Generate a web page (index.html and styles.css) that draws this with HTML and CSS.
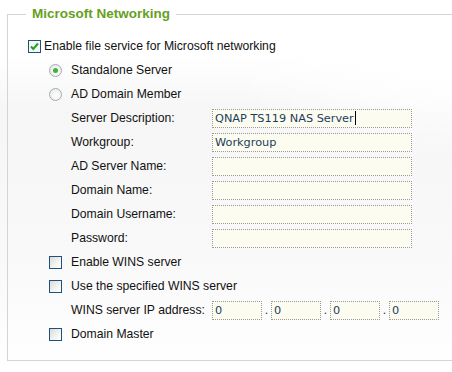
FILE: index.html
```html
<!DOCTYPE html>
<html>
<head>
<meta charset="utf-8">
<link rel="stylesheet" href="styles.css">
</head>
<body>
<fieldset class="panel">
  <legend class="panel-title">Microsoft Networking</legend>
  <div class="row">
    <span class="box checked"><svg viewBox="0 0 11 11" width="11" height="11"><path d="M2 5.5 L4.3 8 L9 2.5" fill="none" stroke="#21a121" stroke-width="2"/></svg></span>
    <span class="lbl-main">Enable file service for Microsoft networking</span>
  </div>
  <div class="sub">
    <div class="row"><span class="radio on"></span><span class="lbl">Standalone Server</span></div>
    <div class="row"><span class="radio"></span><span class="lbl">AD Domain Member</span></div>
    <div class="fields">
      <div class="row"><span class="flabel">Server Description:</span><span class="field">QNAP TS119 NAS Server<span class="caret"></span></span></div>
      <div class="row"><span class="flabel">Workgroup:</span><span class="field">Workgroup</span></div>
      <div class="row"><span class="flabel">AD Server Name:</span><span class="field"></span></div>
      <div class="row"><span class="flabel">Domain Name:</span><span class="field"></span></div>
      <div class="row"><span class="flabel">Domain Username:</span><span class="field"></span></div>
      <div class="row"><span class="flabel">Password:</span><span class="field"></span></div>
    </div>
    <div class="row"><span class="box"></span><span class="lbl">Enable WINS server</span></div>
    <div class="row"><span class="box"></span><span class="lbl">Use the specified WINS server</span></div>
    <div class="fields">
      <div class="row"><span class="flabel">WINS server IP address:</span>
        <span class="ip">
          <span class="field oct">0</span><span class="dot">.</span>
          <span class="field oct">0</span><span class="dot">.</span>
          <span class="field oct">0</span><span class="dot">.</span>
          <span class="field oct">0</span>
        </span>
      </div>
    </div>
    <div class="row"><span class="box"></span><span class="lbl">Domain Master</span></div>
  </div>
</fieldset>
</body>
</html>
```
FILE: styles.css
```css
html, body {
  margin: 0;
  padding: 0;
  width: 452px;
  height: 372px;
  overflow: hidden;
}
body {
  font-family: "Liberation Sans", Arial, sans-serif;
  font-size: 12.2px;
  color: #111;
  background:
    radial-gradient(ellipse 260px 120px at 470px 40px, rgba(255,255,255,1) 30%, rgba(255,255,255,0) 100%),
    linear-gradient(180deg, #ffffff 0px, #ffffff 55px, #f6f6f6 110px, #f9f9f9 260px, #ffffff 372px);
}
.panel {
  margin: 6px 0 0 7px;
  width: 445px;
  height: 355px;
  box-sizing: border-box;
  border: 1px solid #d4d4d4;
  border-right: none;
  padding: 12px 0 0 20px;
  min-width: 0;
}
.panel-title {
  font-family: "Liberation Sans", Arial, sans-serif;
  font-weight: bold;
  font-size: 13.5px;
  line-height: 16px;
  color: #66a023;
  padding: 0 6px;
  margin-left: -2px;
}
.row {
  display: flex;
  align-items: center;
  height: 24px;
}
.box {
  width: 13px;
  height: 13px;
  box-sizing: border-box;
  border: 1px solid #1c5180;
  background: linear-gradient(135deg, #dcdcd6 0%, #f4f4f0 60%, #ffffff 100%);
  display: flex;
  align-items: center;
  justify-content: center;
  flex: none;
}
.box.checked {
  background: #f6f6f4;
}
.lbl-main {
  margin-left: 3px;
}
.sub {
  padding-left: 21px;
}
.radio {
  width: 13px;
  height: 13px;
  box-sizing: border-box;
  border: 1px solid #a0aab4;
  border-radius: 50%;
  background: radial-gradient(circle at 60% 60%, #ffffff 0%, #e6e6e0 100%);
  flex: none;
  display: flex;
  align-items: center;
  justify-content: center;
}
.radio.on::after {
  content: "";
  width: 5px;
  height: 5px;
  border-radius: 50%;
  background: #3cb43c;
}
.lbl {
  margin-left: 9px;
}
.fields {
  padding-left: 22px;
}
.flabel {
  width: 141px;
  flex: none;
}
.field {
  width: 200px;
  height: 19px;
  box-sizing: border-box;
  border: 1px dotted #9a9a9a;
  background: #fcfcf0;
  color: #1c3c5c;
  font-family: "DejaVu Sans", Verdana, sans-serif;
  font-size: 11.3px;
  line-height: 17px;
  padding-left: 2px;
  display: flex;
  align-items: center;
  white-space: nowrap;
}
.caret {
  width: 1px;
  height: 14px;
  background: #000;
  margin-left: 1px;
}
.ip {
  display: flex;
  align-items: center;
}
.field.oct {
  width: 50px;
}
.dot {
  width: 9px;
  text-align: center;
  color: #333;
}
```
